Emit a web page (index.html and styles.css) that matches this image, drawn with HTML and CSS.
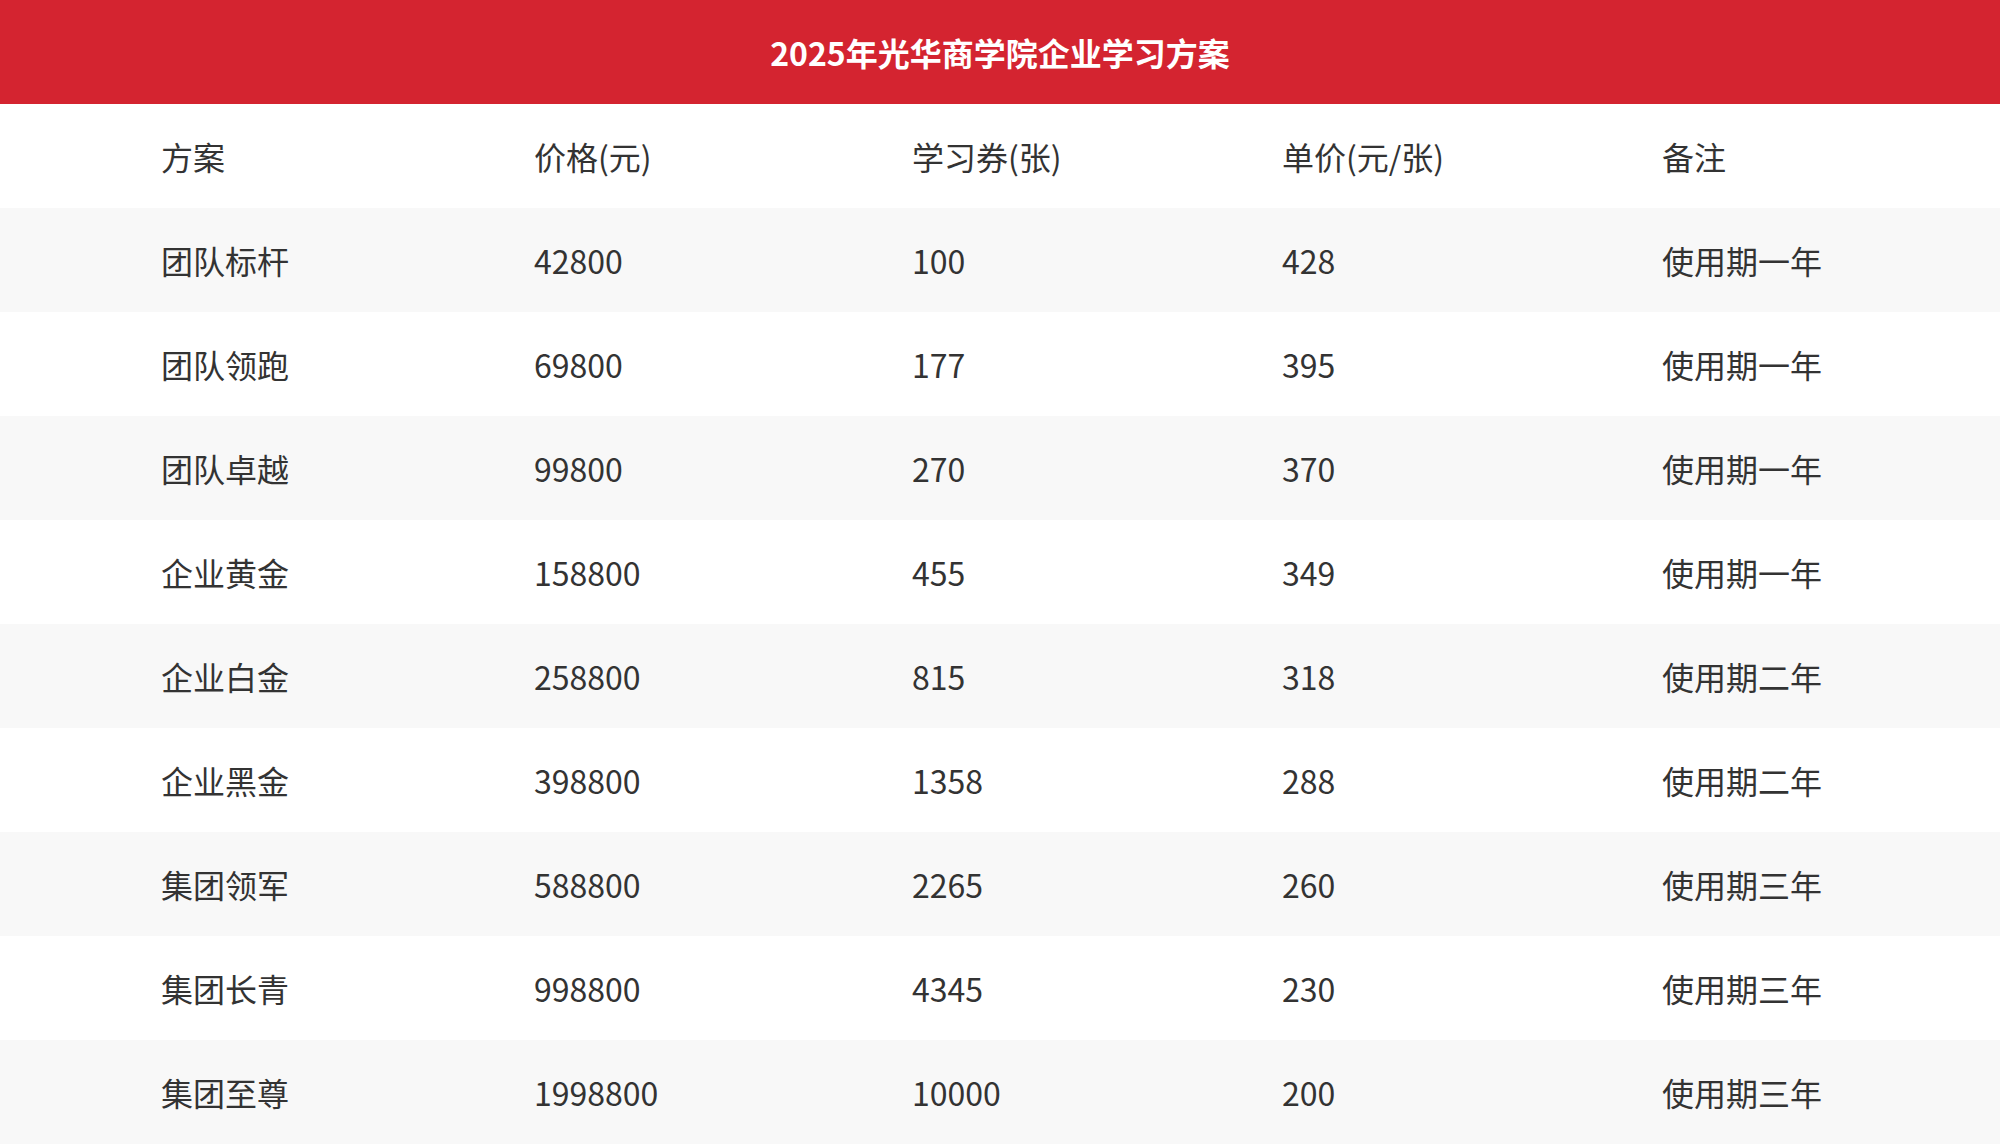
FILE: index.html
```html
<!DOCTYPE html>
<html lang="zh-CN">
<head>
<meta charset="utf-8">
<title>2025年光华商学院企业学习方案</title>
<link rel="stylesheet" href="styles.css">
</head>
<body>
<div class="page">
  <div class="title-bar">2025年光华商学院企业学习方案</div>
  <div class="table">
    <div class="row head">
      <div class="cell">方案</div>
      <div class="cell">价格(元)</div>
      <div class="cell">学习券(张)</div>
      <div class="cell">单价(元/张)</div>
      <div class="cell">备注</div>
    </div>
    <div class="row alt">
      <div class="cell">团队标杆</div><div class="cell">42800</div><div class="cell">100</div><div class="cell">428</div><div class="cell">使用期一年</div>
    </div>
    <div class="row">
      <div class="cell">团队领跑</div><div class="cell">69800</div><div class="cell">177</div><div class="cell">395</div><div class="cell">使用期一年</div>
    </div>
    <div class="row alt">
      <div class="cell">团队卓越</div><div class="cell">99800</div><div class="cell">270</div><div class="cell">370</div><div class="cell">使用期一年</div>
    </div>
    <div class="row">
      <div class="cell">企业黄金</div><div class="cell">158800</div><div class="cell">455</div><div class="cell">349</div><div class="cell">使用期一年</div>
    </div>
    <div class="row alt">
      <div class="cell">企业白金</div><div class="cell">258800</div><div class="cell">815</div><div class="cell">318</div><div class="cell">使用期二年</div>
    </div>
    <div class="row">
      <div class="cell">企业黑金</div><div class="cell">398800</div><div class="cell">1358</div><div class="cell">288</div><div class="cell">使用期二年</div>
    </div>
    <div class="row alt">
      <div class="cell">集团领军</div><div class="cell">588800</div><div class="cell">2265</div><div class="cell">260</div><div class="cell">使用期三年</div>
    </div>
    <div class="row">
      <div class="cell">集团长青</div><div class="cell">998800</div><div class="cell">4345</div><div class="cell">230</div><div class="cell">使用期三年</div>
    </div>
    <div class="row alt">
      <div class="cell">集团至尊</div><div class="cell">1998800</div><div class="cell">10000</div><div class="cell">200</div><div class="cell">使用期三年</div>
    </div>
  </div>
</div>
</body>
</html>
```

FILE: styles.css
```css
html, body {
  margin: 0;
  padding: 0;
  background: #ffffff;
}

.page {
  width: 2000px;
  font-family: "Noto Sans CJK SC", "Noto Sans", sans-serif;
  color: #333333;
}

.title-bar {
  height: 104px;
  background: #d42430;
  color: #ffffff;
  font-size: 32px;
  font-weight: 700;
  display: flex;
  align-items: center;
  justify-content: center;
}

.row {
  height: 104px;
  display: grid;
  grid-template-columns: 373px 378px 370px 380px 1fr;
  align-items: center;
  padding-left: 161px;
  font-size: 32px;
  background: #ffffff;
}

.row.alt {
  background: #f8f8f8;
}

.cell {
  white-space: nowrap;
}
```
